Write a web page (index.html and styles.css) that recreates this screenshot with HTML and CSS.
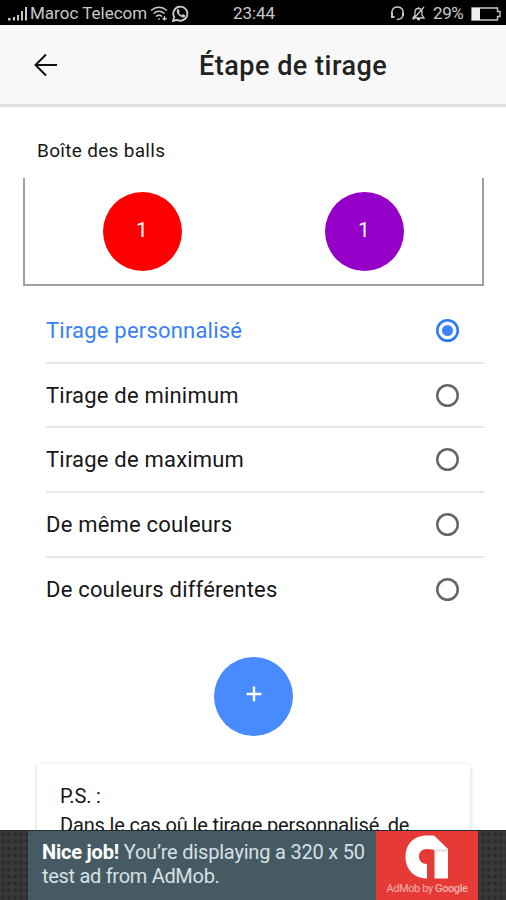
FILE: index.html
```html
<!DOCTYPE html>
<html lang="fr">
<head>
<meta charset="utf-8">
<title>Étape de tirage</title>
<link rel="stylesheet" href="styles.css">
</head>
<body>
<div class="screen">
  <div class="status">
    <div class="status-left">
      <svg width="20" height="14" viewBox="0 0 20 14" fill="currentColor"><path d="M0 11h2.500v2.500H0zM5 10h2v3.500H5zM9 8h2v5.500H9zM13 4h2v9.500h-2zM17 0h2v13.500h-2z"/></svg>
      <span class="carrier">Maroc Telecom</span>
      <svg class="wifi" width="18" height="15" viewBox="0 0 18 15" fill="none" stroke="currentColor" stroke-width="1.600"><path d="M1 4.500Q9-2 17 4.500M3.500 7.500Q9 3 14.500 7.500M6 10.500Q9 8 12 10.500"/><path d="M9 12v2M14.500 10v4M12.500 12l2 2 2-2" stroke-width="1.200"/></svg>
      <svg class="whats" width="17" height="17" viewBox="0 0 17 17"><path d="M1 16l1.200-4A7 7 0 1 1 5 14.800z" fill="none" stroke="currentColor" stroke-width="1.900"/><path d="M5 4.500l1.500-.5 1.200 2.600-.8 1.100Q8 9.600 9.800 10.200l1-1.100 2.400 1.200-.4 1.600Q11 13.500 7.800 11 4 8 5 4.500z" fill="currentColor"/></svg>
    </div>
    <span class="time">23:44</span>
    <div class="status-right">
      <svg width="15" height="15" viewBox="0 0 15 15" fill="none" stroke="currentColor" stroke-width="1.500"><path d="M2 9.500Q.8 1 7.500 1T13 9.500Q12.500 13 7 13.500"/><path d="M2 6.500v4.500H4.500M13 6.500V10" stroke-width="2"/></svg>
      <svg class="bell" width="13" height="15" viewBox="0 0 13 15" fill="none" stroke="currentColor" stroke-width="1.300"><path d="M1 12h11L10 9V6Q10 2.500 6.500 2.500T3 6v3zM5 13.500h3M12 1L1 13.500M6.500 1v1.500"/></svg>
      <span class="percent">29%</span>
      <svg width="30" height="14" viewBox="0 0 30 14"><path d="M1 1h25.500v3.500H29v5h-2.500V13H1z" fill="none" stroke="currentColor" stroke-width="1.400"/><path d="M1 1h8v12H1z" fill="#eee"/></svg>
    </div>
  </div>
  <header class="header">
    <svg class="back" width="24" height="24" viewBox="0 0 24 24" fill="none" stroke="#111" stroke-width="2"><path d="M12 1.500L1.500 12 12 22.500M1.500 12H23"/></svg>
    <h1>Étape de tirage</h1>
  </header>
  <main class="content">
    <h2 class="box-title">Boîte des balls</h2>
    <div class="box">
      <div class="cell"><div class="ball red">1</div></div>
      <div class="cell"><div class="ball purple">1</div></div>
    </div>
    <div class="options">
      <div class="option selected"><span>Tirage personnalisé</span><i class="radio"></i></div>
      <div class="option"><span>Tirage de minimum</span><i class="radio"></i></div>
      <div class="option"><span>Tirage de maximum</span><i class="radio"></i></div>
      <div class="option"><span>De même couleurs</span><i class="radio"></i></div>
      <div class="option"><span>De couleurs différentes</span><i class="radio"></i></div>
    </div>
    <div class="add"><svg width="16" height="16" viewBox="0 0 16 16" stroke="#fff" stroke-width="2.400"><path d="M8 .5v15M.5 8h15"/></svg></div>
    <div class="card"><p>P.S. :</p><p>Dans le cas oû le tirage personnalisé, de</p></div>
  </main>
  <footer class="ad">
    <div class="banner">
      <div class="ad-text"><div class="ad-lead"><b>Nice job!</b> You’re displaying a 320 x 50</div><div>test ad from AdMob.</div></div>
      <div class="ad-logo">
        <svg width="44" height="44" viewBox="0 0 44 44"><path d="M22 43.500V29C17 29 14 26 14 21.500S17 14 22 14H29.500V43.500H43V14L29 .5H22C8 .5.5 10 .5 22S9 43.500 22 43.500z" fill="#fff"/><path d="M22 14H43v3H29.500V15z" fill="#e6e6e6"/></svg>
        <div class="brand">AdMob by <span>Google</span></div>
      </div>
    </div>
  </footer>
</div>
</body>
</html>
```
FILE: styles.css
```css
* { box-sizing: border-box; }
body { margin: 0; font-family: Roboto, "Liberation Sans", sans-serif; color: #171717; background: #fff; }
svg { display: block; flex: none; }
h1, h2, p { margin: 0; font-weight: 400; }
.screen { width: 506px; height: 900px; overflow: hidden; display: flex; flex-direction: column; }
.status { height: 25px; flex: none; background: #000; color: #c8c8c8; display: grid; grid-template-columns: 233px 42px 1fr; align-items: center; font-size: 17px; line-height: 23px; white-space: nowrap; padding-top: 2px; }
.status-left { display: flex; align-items: center; padding-left: 8px; }
.carrier { width: 119px; margin-left: 2px; }
.wifi { margin-left: 1px; }
.whats { margin-left: 4px; }
.time { letter-spacing: -.1px; }
.status-right { display: flex; align-items: center; padding-left: 115px; }
.bell { margin-left: 7px; }
.percent { width: 31px; margin: 0 7px 0 8px; letter-spacing: -.4px; }
.header { height: 82px; flex: none; background: #f8f8f8; border-bottom: 3px solid #dfdfdf; display: flex; align-items: center; padding-left: 34px; }
.back { width: 24px; }
h1 { margin-left: 141px; font-size: 27px; font-weight: 500; letter-spacing: .5px; white-space: nowrap; padding-top: 2px; color: #222; }
.content { height: 723px; flex: none; padding: 32px 22px 0 23px; }
.box-title { height: 39px; line-height: 24px; padding-left: 14px; font-size: 19px; letter-spacing: .3px; }
.box { height: 108px; border: 2px solid #a0a0a0; border-top: 0; display: grid; grid-template-columns: 1fr 1fr; padding: 14px 7px 0 6px; }
.cell { display: flex; justify-content: center; }
.ball { width: 79px; height: 79px; border-radius: 50%; color: #fff; font-size: 21px; line-height: 77px; text-align: center; }
.red { background: #f00; }
.purple { background: #9400c8; }
.options { margin: 13px 0 0 23px; }
.option { height: 64.700px; display: flex; align-items: center; justify-content: space-between; border-bottom: 2px solid #e8e8e8; padding-right: 25px; font-size: 22px; letter-spacing: .2px; white-space: nowrap; }
.option:last-child { border-color: transparent; }
.selected { color: #3780f5; }
.radio { width: 23px; height: 23px; box-shadow: inset 0 0 0 2.500px #666; border-radius: 50%; display: grid; place-items: center; }
.selected .radio { box-shadow: inset 0 0 0 2.500px #287af8; }
.selected .radio::after { content: ""; width: 11px; height: 11px; border-radius: 50%; background: #3984fa; }
.add { width: 79px; height: 79px; margin: 35px 0 0 191px; border-radius: 50%; background: #488aff; display: grid; place-items: center; padding-bottom: 5px; }
.card { width: 433px; height: 160px; margin: 28px 0 0 14px; padding: 18px 23px; border-radius: 3px; box-shadow: 0 1px 4px rgba(0,0,0,.2); font-size: 20px; line-height: 29px; letter-spacing: -.15px; white-space: nowrap; }
.ad { position: relative; height: 70px; flex: none; background: #303030 radial-gradient(circle, #2b2b2b 1.200px, #393939 2.500px) 0 0 / 6px 7px; border-top: 1px solid #242d30; padding: 0 28px; }
.banner { height: 69px; display: flex; background: #465a64; }
.ad-text { width: 348px; flex: none; padding: 9px 0 0 14px; color: #d7e0e4; font-size: 20px; line-height: 24px; letter-spacing: -.3px; white-space: nowrap; }
.ad-lead { letter-spacing: -.2px; }
.ad-text b { color: #fff; }
.ad-logo { width: 102px; background: #e53a35; display: flex; flex-direction: column; align-items: center; padding-top: 4px; }
.brand { color: #f5b0ad; font-size: 11px; line-height: 20px; letter-spacing: -.4px; white-space: nowrap; }
.brand span { font-weight: 500; }
```
